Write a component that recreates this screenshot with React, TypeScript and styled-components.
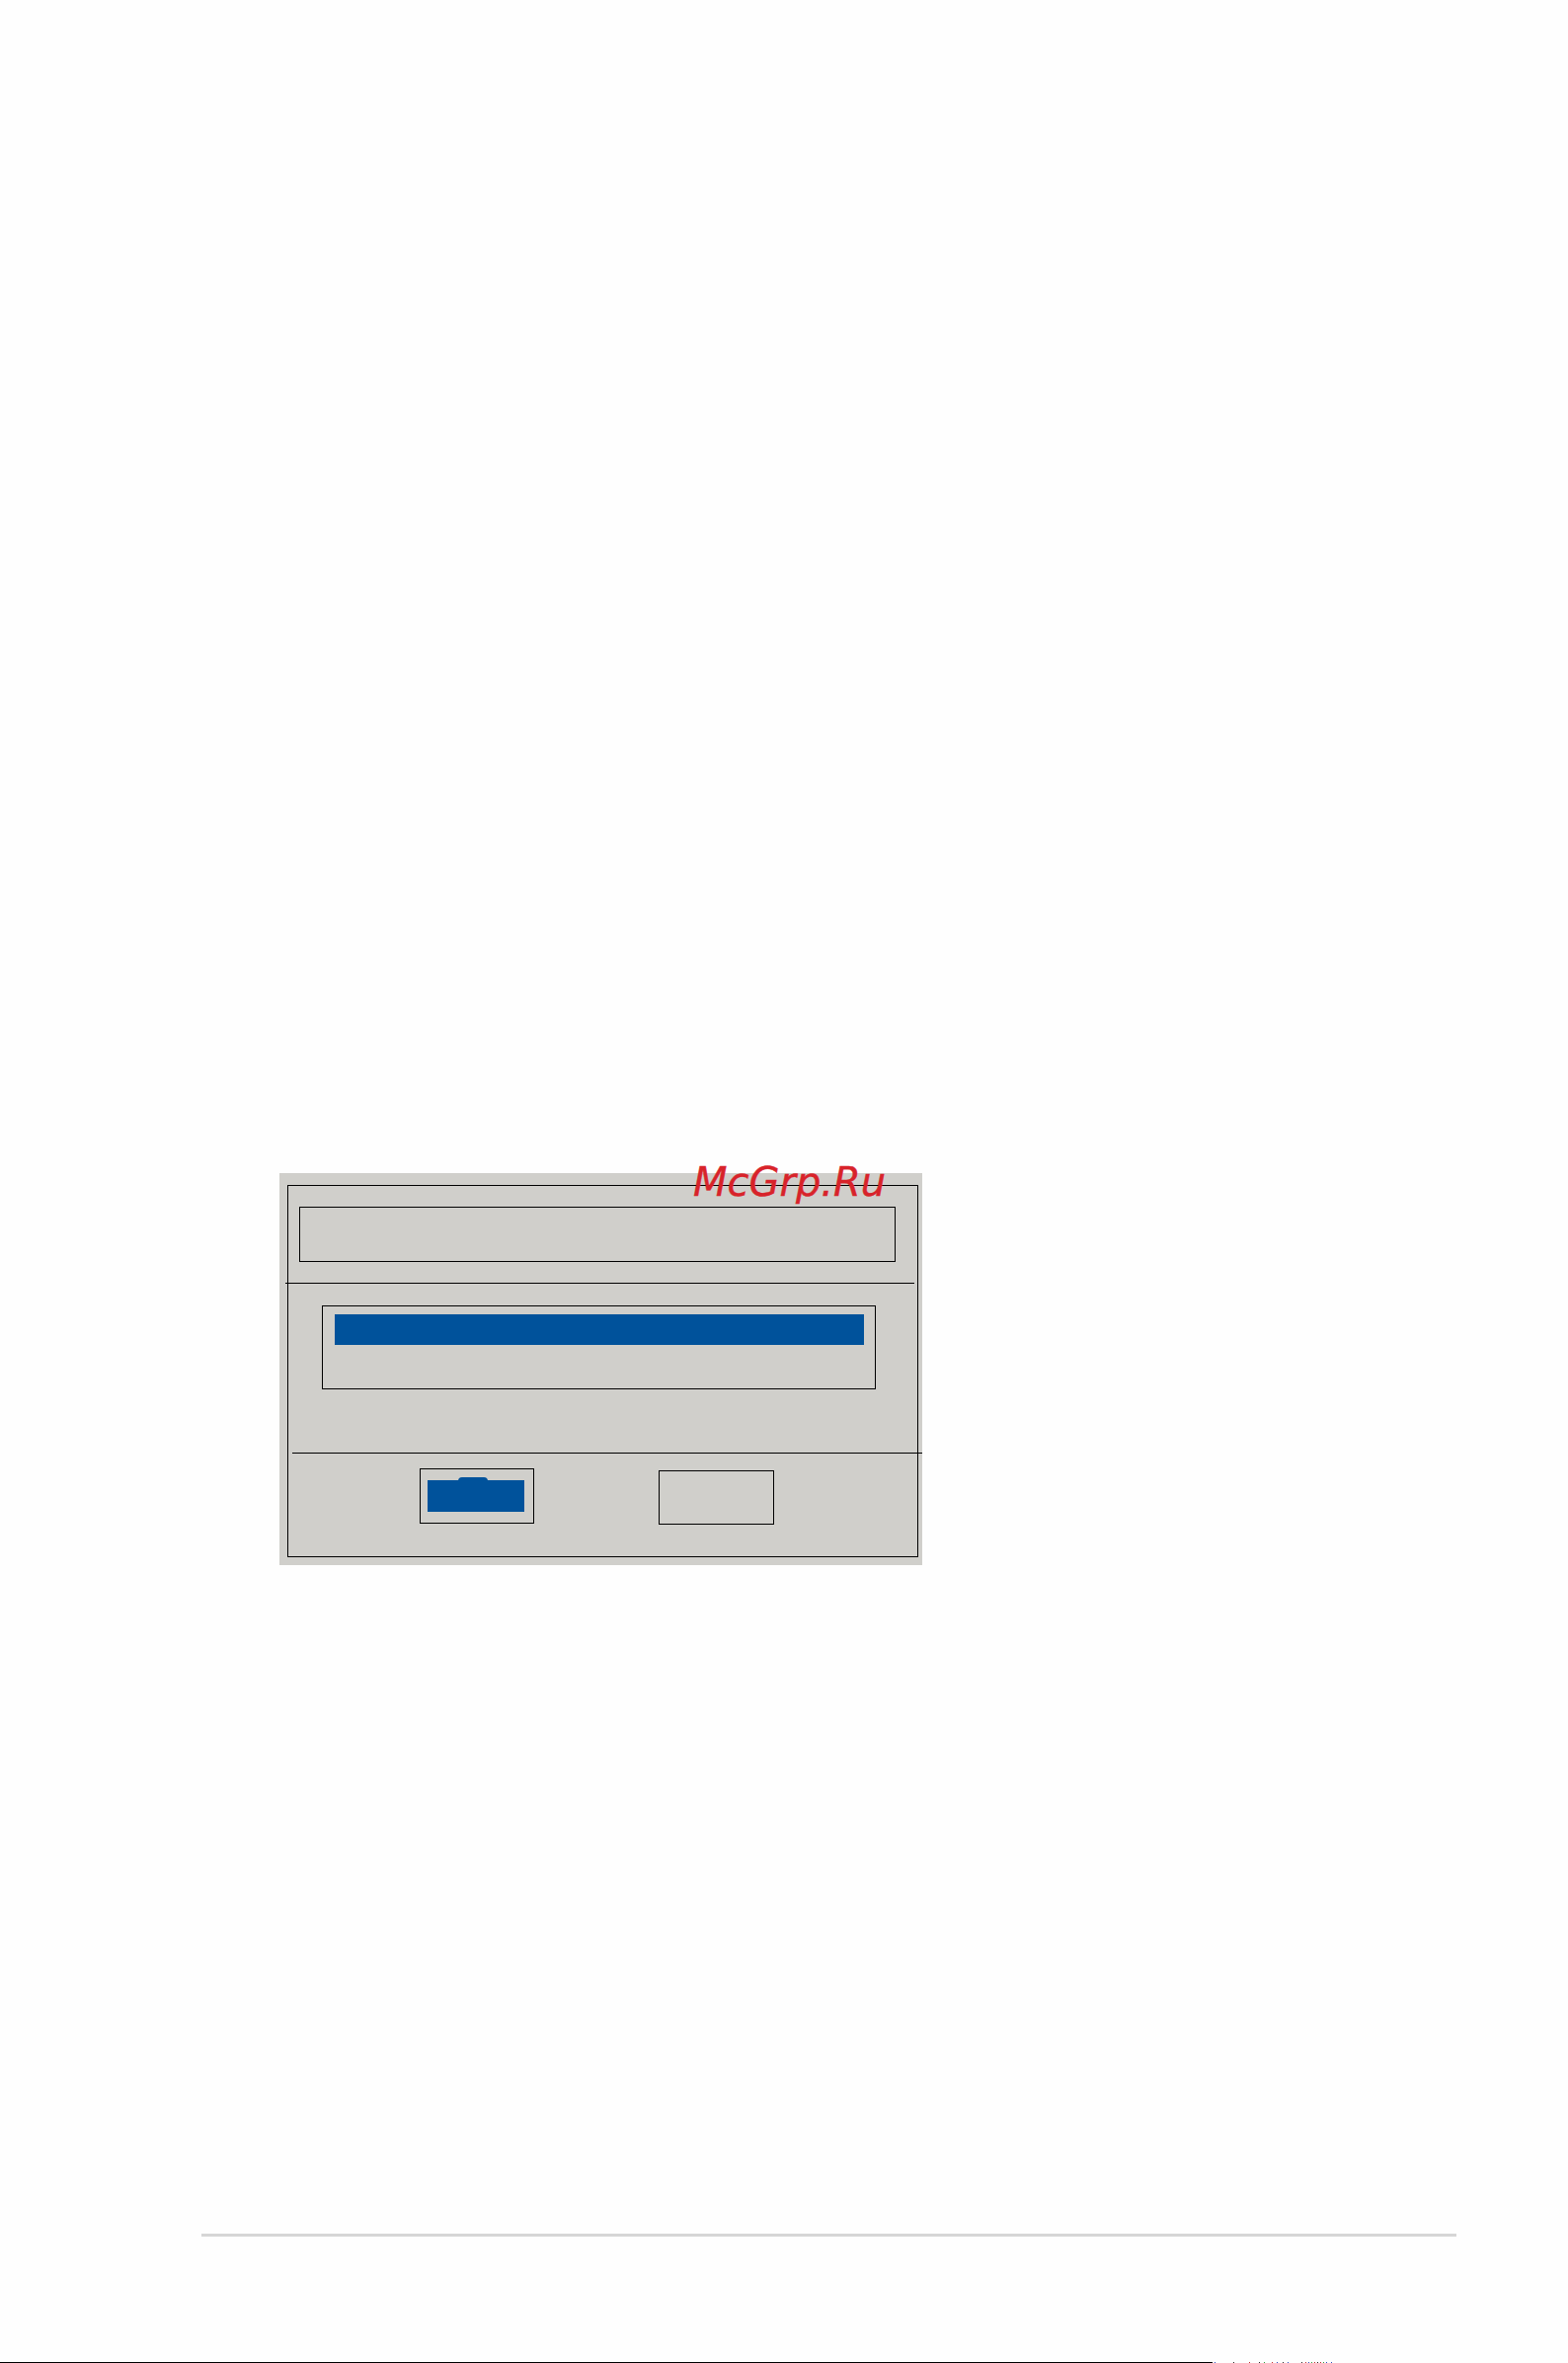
import React from 'react';
import styled, { createGlobalStyle } from 'styled-components';

const GlobalStyle = createGlobalStyle`
  *, *::before, *::after {
    box-sizing: border-box;
  }

  html, body {
    margin: 0;
    padding: 0;
    background: #fefefe;
    font-family: "DejaVu Sans", "Liberation Sans", sans-serif;
  }
`;

const DIALOG_GREY = '#d0cfcb';
const SELECT_BLUE = '#00529b';

// speckles along the bottom edge: [gap before, colour]
const SPECKS: [number, string][] = [
  [2, '#3050c0'], [18, '#2a2a2a'], [15, '#c03030'], [9, '#2a2a2a'], [4, '#30a040'],
  [7, '#c03030'], [4, '#3050c0'], [5, '#2a2a2a'], [4, '#3050c0'], [13, '#2a2a2a'],
  [3, '#c03030'], [2, '#3050c0'], [2, '#30a040'], [2, '#c03030'], [2, '#2a2a2a'],
  [2, '#c03030'], [2, '#30a040'], [2, '#3050c0'], [4, '#3050c0'],
];

export default function App() {
  return (
    <>
      <GlobalStyle />
      <Page>
        <Dialog>
          <Watermark>McGrp.Ru</Watermark>
          <Frame>
            <TitleBox />
            <Divider $left={-3} $width={637} $top={21} />
            <ListBox>
              <SelectedRow />
            </ListBox>
            <Divider $left={4} $width={638} $top={64} />
            <ButtonRow>
              <DialogButton $width={116} $height={56}>
                <DefaultFill />
              </DialogButton>
              <DialogButton $width={117} $height={55} $offset={2} />
            </ButtonRow>
          </Frame>
        </Dialog>

        <FooterRule />

        <BottomEdge>
          <EdgeLine />
          {SPECKS.map(([gap, colour], i) => (
            <Speck key={i} $gap={gap} $colour={colour} />
          ))}
        </BottomEdge>
      </Page>
    </>
  );
}

const Page = styled.div`
  width: 1588px;
  height: 2393px;
  display: flex;
  flex-direction: column;
  padding-top: 1188px;
  overflow: hidden;
  background: #fefefe;
`;

const Dialog = styled.div`
  position: relative;
  margin-left: 283px;
  width: 651px;
  height: 398px;
  padding: 12px 0 0 8px;
  background: ${DIALOG_GREY};
`;

const Watermark = styled.div`
  position: absolute;
  top: -11px;
  left: 419px;
  font-family: "DejaVu Sans", sans-serif;
  font-style: oblique;
  font-size: 40px;
  line-height: 1;
  color: #d8232a;
  -webkit-text-stroke: 0.4px #d8232a;
  white-space: nowrap;
`;

const Frame = styled.div`
  width: 639px;
  height: 377px;
  border: 1px solid #000;
  display: flex;
  flex-direction: column;
  align-items: flex-start;
`;

const TitleBox = styled.div`
  margin: 21px 0 0 11px;
  width: 604px;
  height: 56px;
  border: 1px solid #000;
`;

const Divider = styled.div<{ $left: number; $width: number; $top: number }>`
  margin-top: ${(p) => p.$top}px;
  margin-left: ${(p) => p.$left}px;
  width: ${(p) => p.$width}px;
  height: 1px;
  background: #000;
  flex-shrink: 0;
`;

const ListBox = styled.div`
  margin: 22px 0 0 34px;
  width: 561px;
  height: 85px;
  border: 1px solid #000;
  padding: 8px 0 0 12px;
`;

const SelectedRow = styled.div`
  width: 536px;
  height: 31px;
  background: ${SELECT_BLUE};
`;

const ButtonRow = styled.div`
  margin: 15px 0 0 133px;
  display: flex;
  align-items: flex-start;
  gap: 126px;
`;

const DialogButton = styled.div<{ $width: number; $height: number; $offset?: number }>`
  width: ${(p) => p.$width}px;
  height: ${(p) => p.$height}px;
  margin-top: ${(p) => p.$offset ?? 0}px;
  border: 1px solid #000;
  padding: 11px 0 0 7px;
`;

const DefaultFill = styled.div`
  position: relative;
  width: 98px;
  height: 32px;
  background: ${SELECT_BLUE};

  /* caption glyph tops poking above the highlight */
  &::before {
    content: '';
    position: absolute;
    top: -3px;
    left: 31px;
    width: 30px;
    height: 5px;
    border-radius: 4px 4px 0 0;
    background: ${SELECT_BLUE};
  }
`;

const FooterRule = styled.div`
  margin: 677px 0 0 204px;
  width: 1271px;
  height: 3px;
  background: #d6d6d6;
`;

const BottomEdge = styled.div`
  margin-top: 127px;
  height: 1px;
  display: flex;
  align-items: flex-start;
`;

const EdgeLine = styled.div`
  width: 1228px;
  height: 1px;
  background: #000;
`;

const Speck = styled.span<{ $gap: number; $colour: string }>`
  margin-left: ${(p) => p.$gap}px;
  width: 1px;
  height: 1px;
  background: ${(p) => p.$colour};
`;
